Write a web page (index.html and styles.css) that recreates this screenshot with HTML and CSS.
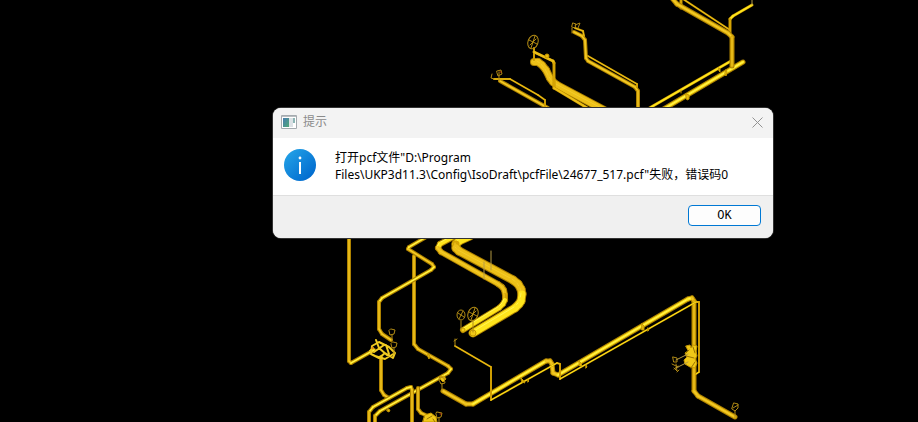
FILE: index.html
```html
<!DOCTYPE html>
<html lang="zh-CN">
<head>
<meta charset="utf-8">
<title>提示</title>
<link rel="stylesheet" href="styles.css">
</head>
<body>
<main class="viewport">
  <svg class="model" viewBox="0 0 918 422" preserveAspectRatio="xMinYMin slice" aria-hidden="true">
    <defs>
      <g id="wheel">
        <ellipse rx="5" ry="7" transform="rotate(20)"/>
        <path d="M-2 6L2-6M-4-2L4 2M-3 3L3-3"/>
      </g>
    </defs>
    <g id="pipes"></g>
    <g class="fittings">
      <ellipse cx="547" cy="56" rx="2" ry="2"/>
      <path d="M686 94l3 1v4l-2 1-1-3zM726 70l1 2-1 4-1-2zM719 68l1 1v3l-1-1zM681 90v3M428 354l2 2-1 3-1-2zM388 409l2 1-1 2-2-1zM521 378l2 2 2 3-3-1zM579 361l2 2 1 3-2 0zM642 324l2 2v4l-2 0zM586 365l1 2-1 1zM528 380l1 1-1 1zM648 328l1 2-1 1z"/>
      <path class="body" d="M686 346l4-1 1 3 2-3 4 1-1 5 1 5-2 3 2 4-2 5-5-1-5-3-1-4 3-3-2-4 3-2z"/>
      <path class="shade" d="M686 356l8 2M693 347l2 6M691 368l4-6M689 350l-3 3"/>
      <path class="body" d="M425 415l6-2 5 4 1 5h-14z"/>
      <path class="shade" d="M427 419l5-3M433 419l2 3"/>
      <path class="body" d="M440 377l4-1 2 3-3 3-2-2z"/>
      <circle class="body" cx="463" cy="330" r="2"/><circle class="body" cx="473" cy="333" r="3"/>
    </g>
    <g class="valve">
      <path d="M372 346l7-4 10 5 6 6-2 5-8-5-6 5-8-4zM376 340l3 8 8 7M374 352l10-7M386 345l3 9M375 356l10 3 10-6M370 351l3-3"/>
    </g>
    <g class="wheels">
      <use href="#wheel" x="533" y="42"/>
      <use href="#wheel" x="473" y="314"/>
      <ellipse cx="461" cy="315" rx="4" ry="5"/>
      <path d="M459 319l4-8M458 313l6 4M461 321v8M473 320v12"/>
      <path d="M497 71l4-1 1 4-4 2-1-3zM499 76v5M499 72v3M492 74l-1 4 3 1M573 23l3 1-1 4-3-1zM575 25l5-2-2 5M572 28v5"/>
      <path d="M391 329l4 1-1 4-4 1-1-4zM392 335v6M393 342l4 1-1 4-4 1-1-4zM394 348v6M440 377l4 1 1 5-4 1-2-4zM442 384v7M437 412l5 1-1 4-4 1-1-4zM439 418v4"/>
      <path d="M455 339v7M454 341l3-2M734 403l4 1 0 4-3 3-3-2zM733 408l5-3M735 411v7M673 357l4 1 0 4-3 0zM672 364l6 3M674 368l3 3-1-7M674 369l4-3M677 372l2-2"/>
      <path class="stem" d="M676 360l12-6M676 368l12-6M484 262v17M491 251v19M752 0v5"/>
      <path class="red" d="M500 72h1M372 348h1M440 414h1"/>
    </g>
  </svg>

  <section class="dialog" role="dialog" aria-labelledby="dialog-title" aria-describedby="dialog-message">
    <header class="titlebar">
      <svg class="app-icon" viewBox="0 0 16 14" aria-hidden="true">
        <defs><linearGradient id="screen" x1="0" y1="0" x2="1" y2="1"><stop offset="0" stop-color="#477bb0"/><stop offset="1" stop-color="#50a878"/></linearGradient></defs>
        <path fill="#fff" stroke="#a4aaaf" d="M.5.5h15v13H.5z"/>
        <path fill="#b9bdc0" d="M1 1h14v1H1z"/>
        <path fill="url(#screen)" d="M2 3h6v9H2z"/>
        <path fill="#dce2e6" d="M8 3h4v9H8z"/>
        <path fill="#8bb5b4" d="M12 3h2v5h-2z"/>
      </svg>
      <h1 class="title" id="dialog-title">提示</h1>
      <button class="close" type="button" aria-label="关闭">
        <svg class="close-icon" viewBox="0 0 11 11" aria-hidden="true"><path d="M.5.5l10 10M10.5.5l-10 10"/></svg>
      </button>
    </header>
    <div class="content">
      <svg class="info" viewBox="0 0 32 32" aria-hidden="true">
        <defs><linearGradient id="blue" x1="0" y1="0" x2="1" y2="1"><stop offset=".1" stop-color="#22a0e6"/><stop offset=".9" stop-color="#0069ce"/></linearGradient></defs>
        <circle cx="16" cy="16" r="16" fill="url(#blue)"/>
        <circle cx="16" cy="9" r="1.4" fill="#fff"/>
        <path fill="#fff" d="M15 13h2v12h-2z"/>
      </svg>
      <p class="message" id="dialog-message">打开pcf文件"D:\Program<br>Files\UKP3d11.3\Config\IsoDraft\pcfFile\24677_517.pcf"失败，错误码0</p>
    </div>
    <footer class="actions"><button class="ok" type="button">OK</button></footer>
  </section>
</main>
<script src="pipes.js"></script>
</body>
</html>
```

FILE: styles.css
```css
* {
  box-sizing: border-box;
}

body {
  margin: 0;
  background: #000;
  font-family: "Noto Sans", "Noto Sans CJK SC", sans-serif;
  font-size: 12px;
}

.viewport {
  position: relative;
  min-height: 100vh;
  overflow: hidden;
}

.model {
  display: block;
  width: 100%;
  height: 100vh;
}

.model path,
.model line {
  stroke-linecap: round;
  stroke-linejoin: round;
}

.fittings {
  fill: #e6b90c;
  stroke: #c89a00;
  stroke-width: 1;
}

.body {
  fill: #f0c818;
}

.shade {
  fill: none;
  stroke: #9a7400;
}

.valve {
  fill: none;
  stroke: #efca20;
  stroke-width: 2;
}

.wheels {
  fill: none;
  stroke: #b08a14;
  stroke-width: 1;
}

.stem {
  stroke: #b49a45;
}

.red {
  stroke: #d03010;
}

.dialog {
  position: absolute;
  top: 108px;
  left: 273px;
  width: 500px;
  overflow: hidden;
  border-radius: 8px;
  background: #fff;
  box-shadow: 0 0 0 1px #333;
}

.titlebar {
  display: flex;
  align-items: center;
  gap: 6px;
  height: 30px;
  padding: 0 8px 2px;
  background: #f3f3f3;
}

.app-icon {
  width: 16px;
  height: 14px;
}

.title {
  flex: 1;
  margin: 0;
  color: #8b8b8b;
  font-size: 12px;
  font-weight: 400;
  line-height: 16px;
}

.close {
  display: flex;
  padding: 2px;
  border: 0;
  background: none;
}

.close-icon {
  width: 11px;
  height: 11px;
  fill: none;
  stroke: #929292;
}

.content {
  display: flex;
  align-items: flex-start;
  gap: 19px;
  padding: 11px 11px 12px;
}

.info {
  flex: none;
  width: 32px;
  height: 32px;
}

.message {
  margin: 0;
  color: #000;
  line-height: 17px;
  white-space: nowrap;
}

.actions {
  display: flex;
  justify-content: flex-end;
  padding: 9px 12px 12px;
  border-top: 1px solid #dfdfdf;
  background: #f0f0f0;
}

.ok {
  width: 73px;
  height: 21px;
  padding: 0;
  border: 1px solid #0078d4;
  border-radius: 4px;
  background: #fdfdfd;
  color: #000;
  font: 12px "Liberation Mono", monospace;
}
```

FILE: pipes.js
```js
// Each pipe: diameter followed by its centre line.
const pipes = [
  [4, "349,230 349,361 351,363 374,350"],
  [4, "414,256 414,344 418,349 448,366 451,369 448,373 380,411 375,416 375,424"],
  [4, "428,236 409,247 408,249 432,264 434,267 431,270 382,298 379,302 379,329 382,334 391,340"],
  [4, "381,357 381,390 384,395 389,398"],
  [4, "418,388 418,409 421,413 430,417"],
  [4, "412,424 412,390 411,387 407,388 373,407 369,412 369,424"],
  [6, "455,236 440,244 438,248 441,252 498,284 502,287 504,290 505,295 505,300 503,304 499,308 463,330"],
  [9, "470,236 459,241 456,244 456,248 459,251 513,280 518,284 521,289 522,294 521,301 519,304 515,308 473,333"],
  [4, "500,81 548,108"],
  [2, "494,79 510,79 538,95 545,100 545,108"],
  [8, "534,62 538,62 542,65 546,70 550,78 553,82 557,85 606,111"],
  [2, "534,48 534,60"],
  [3, "534,52 553,61 554,63 554,88 589,109"],
  [4, "574,32 582,36 585,40 586,58 588,61 635,87 638,91 638,110"],
  [2, "588,56 637,84 637,87"],
  [2, "575,28 583,31 584,36"],
  [3, "681,0 681,8"],
  [2, "683,-1 730,30"],
  [3, "752,5 733,16 730,19 730,33"],
  [3, "731,61 646,110"],
  [5, "743,62 662,110"],
  [5, "671,-3 677,4 728,33 732,37 732,66"],
  [5, "443,391 466,404 473,404 546,361 550,361 552,364 553,373 558,375 688,299 692,298 694,301 694,391 698,396 735,417"],
  [2, "455,346 491,367 491,400 557,363 560,364 560,379 696,302 699,302 699,372 696,374"]
];

const group = document.getElementById("pipes");

function draw(name, attributes) {
  const node = document.createElementNS("http://www.w3.org/2000/svg", name);
  for (const key in attributes) node.setAttribute(key, attributes[key]);
  group.append(node);
}

function line(a, b, width, colour, shift) {
  draw("line", {
    x1: a[0] - shift, y1: a[1] - shift, x2: b[0] - shift, y2: b[1] - shift,
    stroke: colour, "stroke-width": width
  });
}

for (const [width, text] of pipes) {
  const points = text.split(" ").map(pair => pair.split(",").map(Number));
  for (let i = 1; i < points.length; i++) {
    line(points[i - 1], points[i], width, width < 4 ? "#c89800" : "#ae8200", 0);
  }
  for (let i = 1; i < points.length; i++) {
    const a = points[i - 1], b = points[i];
    const slope = (b[0] - a[0]) * (b[1] - a[1]);
    // Light comes from the upper left, so rising runs are the brightest.
    const lit = a[0] === b[0] ? "#d6a404" : slope < 0 ? "#ffe51c" : "#edc018";
    line(a, b, width < 4 ? width - 1 : width - 2, lit, 0);
    if (width > 3) line(a, b, 1, slope < 0 ? "#fff455" : "#f4cc2a", width > 5 ? 1 : 0);
  }
}
```
